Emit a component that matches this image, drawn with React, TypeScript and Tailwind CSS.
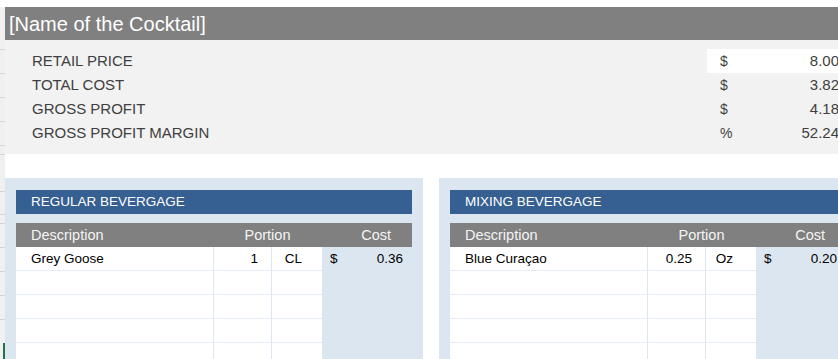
import React from "react";

const stripLines = [49, 73, 97, 121, 145, 154, 191, 214, 223, 247, 271, 295, 319];

const summary = [
  { label: "RETAIL PRICE", unit: "$", value: "8.00", input: true },
  { label: "TOTAL COST", unit: "$", value: "3.82" },
  { label: "GROSS PROFIT", unit: "$", value: "4.18" },
  { label: "GROSS PROFIT MARGIN", unit: "%", value: "52.24" },
];

type Item = { desc: string; qty: string; unit: string; cost: string; unitPad: string };

function RowStrip() {
  // spreadsheet row gutter on the far left
  return (
    <div className="relative w-[5px] shrink-0 bg-[#f0f0f0]">
      <div className="h-[7px] bg-white" />
      {stripLines.map((y) => (
        <div key={y} className="absolute left-0 h-px w-full bg-[#d4d4d4]" style={{ top: y }} />
      ))}
      <div className="absolute left-[3px] top-[343px] h-[20px] w-[2px] bg-[#217346]" />
    </div>
  );
}

function Panel({ title, items }: { title: string; items: Item[] }) {
  const rows: (Item | null)[] = [...items];
  while (rows.length < 5) rows.push(null);

  return (
    <div className="w-[418px] shrink-0 bg-[#dce6f1] px-[11px] pt-[12px]">
      <div className="flex h-[24px] items-center bg-[#366092] pl-[15px] pt-px text-[13.5px] text-white">{title}</div>
      <div className="mt-[9px] flex h-[24px] items-center bg-[#808080] pt-[2px] text-[14.5px] text-[#f4f4f4]">
        <div className="w-[197px] pl-[15px]">Description</div>
        <div className="w-[109px] text-center">Portion</div>
        <div className="w-[89px] pr-[20px] text-right">Cost</div>
      </div>
      {rows.map((r, i) => (
        <div key={i} className="flex h-[24px] shrink-0 text-[13.5px] text-black">
          <div className="flex w-[197px] items-center border-b border-[#e6ecf4] bg-white pl-[15px] pt-[2px]">{r?.desc}</div>
          <div className="flex w-[58px] items-center justify-end border-b border-l border-[#e6ecf4] border-l-[#dce6f1] bg-white pr-[13px] pt-[2px]">
            {r?.qty}
          </div>
          <div
            className={`flex w-[51px] items-center justify-end border-b border-l border-[#e6ecf4] border-l-[#dce6f1] bg-white pt-[2px] ${r?.unitPad ?? ""}`}
          >
            {r?.unit}
          </div>
          <div className="flex w-[89px] items-center justify-between pl-[8px] pr-[8px] pt-px">
            {r && <span>$</span>}
            {r && <span>{r.cost}</span>}
          </div>
        </div>
      ))}
    </div>
  );
}

export default function App() {
  return (
    <div className="flex h-[359px] w-[838px] overflow-hidden bg-white font-['Liberation_Sans',Arial,sans-serif]">
      <RowStrip />
      <div className="flex w-[860px] shrink-0 flex-col pt-[7px]">
        <div className="flex h-[33px] shrink-0 items-center bg-[#808080] pl-[4px] text-[20px] text-white">
          [Name of the Cocktail]
        </div>

        <div className="flex h-[114px] shrink-0 flex-col bg-[#f2f2f2] py-[9px]">
          {summary.map((s) => (
            <div key={s.label} className="flex h-[24px] shrink-0 items-center text-[15px] text-[#3f3f3f]">
              <div className="w-[702px] pl-[27px]">{s.label}</div>
              <div className={`flex h-full w-[132px] items-center justify-between pl-[13px] ${s.input ? "bg-white" : ""}`}>
                <span className="text-[14px]">{s.unit}</span>
                <span>{s.value}</span>
              </div>
            </div>
          ))}
        </div>

        <div className="h-[24px] shrink-0" />

        <div className="flex shrink-0 gap-[16px]">
          <Panel
            title="REGULAR BEVERGAGE"
            items={[{ desc: "Grey Goose", qty: "1", unit: "CL", cost: "0.36", unitPad: "pr-[20px]" }]}
          />
          <Panel
            title="MIXING BEVERGAGE"
            items={[{ desc: "Blue Curaçao", qty: "0.25", unit: "Oz", cost: "0.20", unitPad: "pr-[23px]" }]}
          />
        </div>
      </div>
    </div>
  );
}
